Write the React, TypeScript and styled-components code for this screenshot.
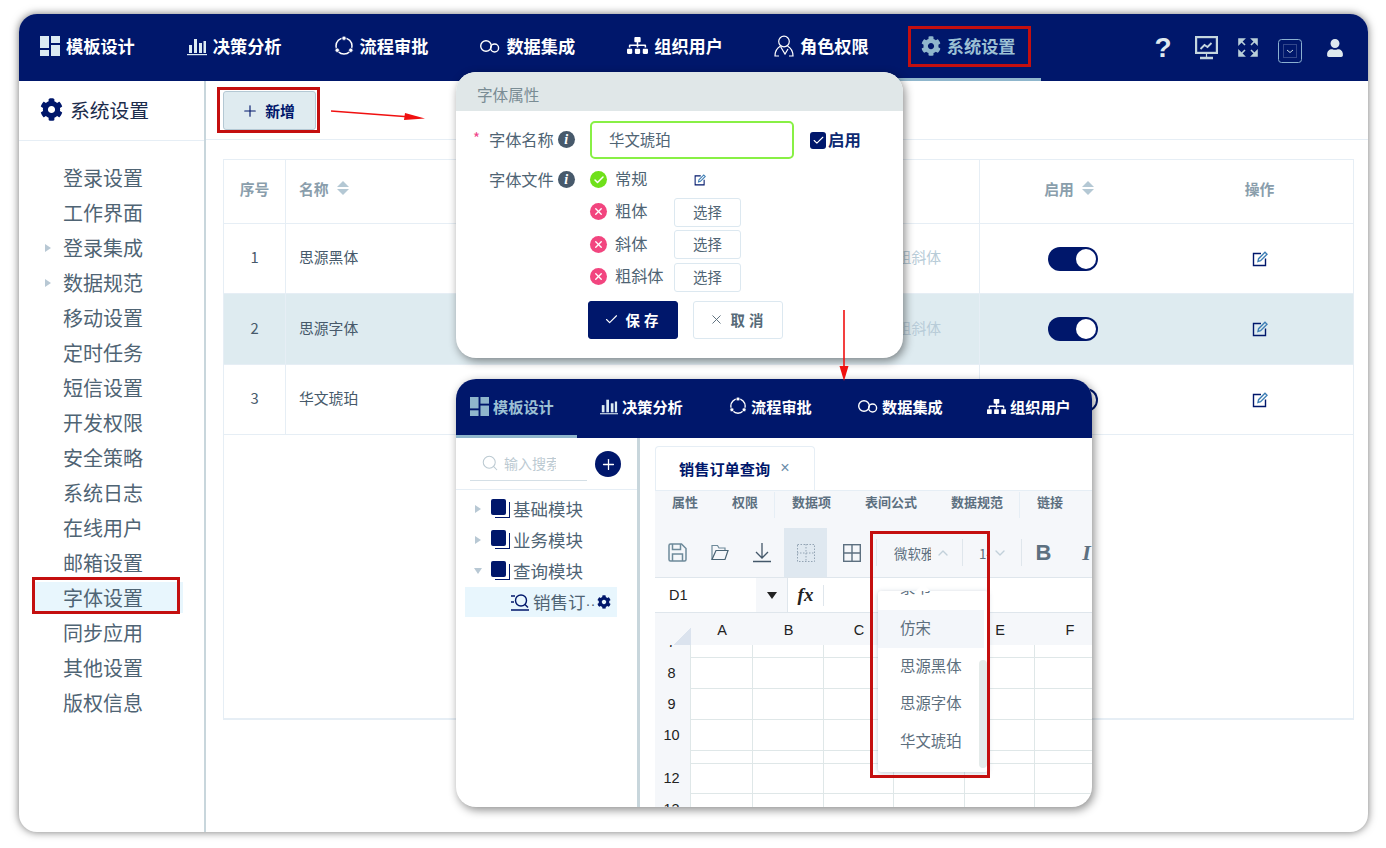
import React from 'react';
import styled, { createGlobalStyle } from 'styled-components';
import { FaCog, FaSitemap, FaUser } from 'react-icons/fa';
import { FiSearch, FiPlus, FiCheck, FiX, FiChevronUp, FiChevronDown } from 'react-icons/fi';

const NAVY = '#00176b';
const RED = '#c40f0f';
const FONT = '"Noto Sans CJK SC", "Liberation Sans", sans-serif';

const GlobalStyle = createGlobalStyle`
  html, body {
    margin: 0;
    padding: 0;
    background: #fff;
  }
  body {
    font-family: ${FONT};
    width: 1386px;
    height: 848px;
    overflow: hidden;
  }
  * {
    box-sizing: border-box;
  }
`;

const Page = styled.div`
  padding: 14px 18px 16px 19px;
`;

const Window = styled.div`
  position: relative;
  width: 1349px;
  height: 818px;
  border-radius: 18px;
  overflow: hidden;
  background: #fff;
  box-shadow: 0 0 9px rgba(0, 0, 0, 0.55);
  display: flex;
  flex-direction: column;
`;

const Header = styled.div`
  height: 67px;
  flex: none;
  background: ${NAVY};
  display: flex;
  align-items: stretch;
`;

const Nav = styled.div<{ $offset: number }>`
  display: flex;
  margin-left: ${(p) => p.$offset}px;
`;

const NavItem = styled.div<{ $active?: boolean }>`
  width: 146.8px;
  flex: none;
  display: flex;
  align-items: center;
  gap: 6px;
  padding: 0 0 1px 27px;
  font-size: 17.2px;
  font-weight: 600;
  color: ${(p) => (p.$active ? '#9cc0d4' : '#fff')};
  border-bottom: 3px solid ${(p) => (p.$active ? '#8fb6cc' : 'transparent')};
  svg {
    flex: none;
  }
`;

const SmallNavItem = styled(NavItem)<{ $first?: boolean }>`
  width: ${(p) => (p.$first ? 121 : 129)}px;
  gap: 4px;
  padding-left: ${(p) => (p.$first ? 14 : 23)}px;
  padding-bottom: 2px;
  font-size: 15.2px;
`;

const HeaderTools = styled.div`
  margin-left: auto;
  display: flex;
  align-items: center;
  color: #dfe9ee;
`;

const ToolSlot = styled.div<{ $w: number; $down?: number }>`
  width: ${(p) => p.$w}px;
  display: flex;
  justify-content: center;
  padding-top: ${(p) => p.$down ?? 0}px;
  font-size: 28px;
  font-weight: 700;
  line-height: 1;
  font-family: "Liberation Sans", sans-serif;
`;

const Body = styled.div`
  flex: 1;
  display: flex;
  min-height: 0;
`;

const Sidebar = styled.div`
  width: 187px;
  flex: none;
  border-right: 2px solid #c8d6dc;
`;

const SideTitle = styled.div`
  height: 60px;
  border-bottom: 1px solid #e6eef5;
  display: flex;
  align-items: center;
  gap: 7px;
  padding: 0 0 2px 21px;
  font-size: 19.8px;
  color: #1c2c4c;
  svg {
    color: ${NAVY};
  }
`;

const SideList = styled.div`
  padding: 19px 0 0 13px;
`;

const SideItem = styled.div<{ $active?: boolean }>`
  position: relative;
  height: 35px;
  width: 151px;
  padding-left: 31px;
  display: flex;
  align-items: center;
  font-size: 20px;
  color: #4f6474;
  background: ${(p) => (p.$active ? 'linear-gradient(#fff 2px, #e8f6fd 2px, #e8f6fd 33px, #fff 33px)' : 'transparent')};
`;

const SideCaret = styled.span`
  position: absolute;
  left: 13px;
  top: 14px;
  width: 0;
  height: 0;
  border-left: 6px solid #b8c8d4;
  border-top: 4.5px solid transparent;
  border-bottom: 4.5px solid transparent;
`;

const Content = styled.div`
  flex: 1;
  min-width: 0;
`;

const TopBar = styled.div`
  height: 59px;
  border-bottom: 1px solid #e6eef5;
  padding: 10px 0 0 17px;
`;

const AddButton = styled.div`
  width: 93px;
  height: 39px;
  background: #dfebf0;
  border: 1px solid #b4c8d4;
  border-radius: 3px;
  display: flex;
  align-items: center;
  justify-content: center;
  gap: 6px;
  padding-right: 3px;
  font-size: 14.8px;
  font-weight: 700;
  color: ${NAVY};
`;

const Table = styled.div`
  margin: 19px 14px 0 17px;
  height: 561px;
  border: 1px solid #e6eef5;
  border-bottom-width: 2px;
`;

const Row = styled.div<{ $h: number; $selected?: boolean }>`
  height: ${(p) => p.$h}px;
  display: grid;
  grid-template-columns: 62px 348px 346px 186px 1fr;
  border-bottom: 1px solid #e6eef5;
  background: ${(p) => (p.$selected ? '#deebf0' : '#fff')};
  font-size: 14.8px;
  color: #46596a;
`;

const Cell = styled.div<{ $align?: string; $line?: boolean; $pad?: number; $head?: boolean; $padRight?: number }>`
  display: flex;
  align-items: center;
  justify-content: ${(p) => p.$align ?? 'flex-start'};
  padding-left: ${(p) => p.$pad ?? 0}px;
  padding-right: ${(p) => p.$padRight ?? 0}px;
  padding-bottom: ${(p) => (p.$head ? 7 : 0)}px;
  border-right: ${(p) => (p.$line ? '1px solid #e6eef5' : 'none')};
  color: ${(p) => (p.$head ? '#8a9eac' : 'inherit')};
  font-weight: ${(p) => (p.$head ? 700 : 400)};
`;

const CellText = styled.span`
  padding-bottom: 4px;
`;

const FontStyles = styled.span`
  padding: 0 38px 4px 0;
  color: #b8ccd8;
  word-spacing: 8px;
`;

const SortMark = styled.span`
  display: inline-flex;
  flex-direction: column;
  gap: 2px;
  margin-left: 8px;
  &::before,
  &::after {
    content: '';
    width: 0;
    height: 0;
    border-left: 6px solid transparent;
    border-right: 6px solid transparent;
  }
  &::before {
    border-bottom: 6px solid #b4c8d4;
  }
  &::after {
    border-top: 6px solid #b4c8d4;
  }
`;

const Toggle = styled.div`
  width: 50px;
  height: 24px;
  border-radius: 12px;
  background: ${NAVY};
  padding: 2px;
  display: flex;
  justify-content: flex-end;
  &::after {
    content: '';
    width: 20px;
    height: 20px;
    border-radius: 50%;
    background: #fff;
  }
`;

/* floating dialog */
const Dialog = styled.div`
  position: absolute;
  left: 437px;
  top: 58px;
  width: 447px;
  height: 286px;
  border-radius: 20px;
  overflow: hidden;
  background: #fff;
  box-shadow: 2px 3px 10px rgba(0, 0, 0, 0.45);
`;

const DialogTitle = styled.div`
  height: 39px;
  background: #e0e7e8;
  padding: 5px 0 0 21px;
  display: flex;
  align-items: center;
  font-size: 15.6px;
  color: #7a8c94;
`;

const Form = styled.div`
  padding: 10px 0 0 33px;
  display: grid;
  grid-template-columns: 101px auto;
  color: #4f6474;
  font-size: 16.2px;
`;

const Label = styled.div<{ $required?: boolean; $top?: number }>`
  position: relative;
  display: flex;
  align-items: center;
  gap: 4px;
  height: 36px;
  margin-top: ${(p) => p.$top ?? 0}px;
  ${(p) =>
    p.$required &&
    `&::before {
      content: '*';
      position: absolute;
      left: -16px;
      top: 6px;
      color: #f0458a;
      font-size: 15px;
    }`}
`;

const InfoDot = styled.span`
  width: 17px;
  height: 17px;
  margin-top: 1px;
  border-radius: 50%;
  background: #47596b;
  color: #fff;
  display: inline-flex;
  align-items: center;
  justify-content: center;
  font: italic 700 14px "Liberation Serif", serif;
`;

const NameRow = styled.div`
  display: flex;
  align-items: center;
  height: 38px;
  margin-bottom: -2px;
`;

const NameInput = styled.div`
  width: 204px;
  height: 38px;
  border: 2px solid #88f045;
  border-radius: 5px;
  padding: 0 0 2px 17px;
  display: flex;
  align-items: center;
  font-size: 15.4px;
  color: #4f6474;
`;

const Check = styled.span`
  margin-left: 16px;
  width: 16px;
  height: 17px;
  border-radius: 3px;
  background: ${NAVY};
  color: #fff;
  display: inline-flex;
  align-items: center;
  justify-content: center;
`;

const CheckLabel = styled.span`
  margin: 0 0 2px 2px;
  font-size: 16.4px;
  font-weight: 600;
  color: #0d2a72;
`;

const FileList = styled.div`
  display: flex;
  flex-direction: column;
  padding-top: 7px;
`;

const FileRow = styled.div<{ $h: number }>`
  height: ${(p) => p.$h}px;
  display: grid;
  grid-template-columns: 25px 59px 66px;
  align-items: center;
`;

const FileName = styled.span`
  padding-bottom: 4px;
`;

const StatusDot = styled.span<{ $ok?: boolean }>`
  width: 17px;
  height: 17px;
  border-radius: 50%;
  margin-bottom: 1px;
  background: ${(p) => (p.$ok ? '#6fe01a' : '#f2457f')};
  color: #fff;
  display: flex;
  align-items: center;
  justify-content: center;
`;

const PickButton = styled.div`
  width: 67px;
  height: 29px;
  border: 1px solid #dce8f0;
  border-radius: 3px;
  padding-bottom: 2px;
  display: flex;
  align-items: center;
  justify-content: center;
  font-size: 14.4px;
  color: #4f6474;
`;

const Actions = styled.div`
  display: flex;
  gap: 15px;
  padding: 7px 0 0 132px;
`;

const ActionButton = styled.div<{ $primary?: boolean }>`
  width: 90px;
  height: 38px;
  border-radius: 3px;
  border: 1px solid ${(p) => (p.$primary ? NAVY : '#dce8f0')};
  background: ${(p) => (p.$primary ? NAVY : '#fff')};
  color: ${(p) => (p.$primary ? '#fff' : '#566a78')};
  font-size: 14.4px;
  font-weight: 700;
  letter-spacing: 4px;
  padding-bottom: 1px;
  display: flex;
  align-items: center;
  justify-content: center;
  gap: 7px;
`;

/* floating designer preview */
const Preview = styled.div`
  position: absolute;
  left: 437px;
  top: 365px;
  width: 636px;
  height: 428px;
  border-radius: 20px;
  overflow: hidden;
  background: #fff;
  box-shadow: 2px 3px 10px rgba(0, 0, 0, 0.45);
  display: flex;
  flex-direction: column;
`;

const PreviewHeader = styled(Header)`
  height: 59px;
`;

const PreviewBody = styled.div`
  flex: 1;
  min-height: 0;
  display: flex;
`;

const TreePane = styled.div`
  width: 184px;
  flex: none;
  border-right: 3px solid #c8d6dc;
`;

const SearchRow = styled.div`
  height: 52px;
  border-bottom: 1px solid #e6eef5;
  display: flex;
  align-items: flex-start;
  padding: 10px 0 0 14px;
  gap: 8px;
`;

const SearchBox = styled.div`
  width: 117px;
  height: 33px;
  border-bottom: 1px solid #d4dfe6;
  display: flex;
  align-items: center;
  gap: 5px;
  padding: 0 0 2px 11px;
  color: #bccad2;
  font-size: 14px;
`;

const SearchText = styled.span`
  width: 52px;
  overflow: hidden;
  white-space: nowrap;
`;

const RoundAdd = styled.div`
  width: 26px;
  height: 26px;
  margin-top: 3px;
  border-radius: 50%;
  background: ${NAVY};
  color: #fff;
  display: flex;
  align-items: center;
  justify-content: center;
`;

const TreeRow = styled.div<{ $first?: boolean }>`
  height: 31px;
  margin-top: ${(p) => (p.$first ? 4 : 0)}px;
  display: flex;
  align-items: center;
  padding: 0 0 2px 19px;
  font-size: 17.5px;
  color: #4f6474;
`;

const TreeCaret = styled.span<{ $open?: boolean }>`
  width: 0;
  height: 0;
  ${(p) =>
    p.$open
      ? `border-top: 6px solid #b8c8d4; border-left: 4.5px solid transparent; border-right: 4.5px solid transparent; margin: 0 9px 0 -1px;`
      : `border-left: 6px solid #b8c8d4; border-top: 4.5px solid transparent; border-bottom: 4.5px solid transparent; margin-right: 10px;`}
`;

const TreeBox = styled.span`
  position: relative;
  width: 17px;
  height: 18px;
  margin: 0 5px 2px 0;
  flex: none;
  &::before {
    content: '';
    position: absolute;
    left: 4px;
    top: 3px;
    width: 14px;
    height: 15px;
    border: 1px solid ${NAVY};
    border-top: none;
    border-left: none;
  }
  &::after {
    content: '';
    position: absolute;
    left: 0;
    top: 0;
    width: 15px;
    height: 16px;
    border-radius: 2px;
    background: ${NAVY};
  }
`;

const TreeLeaf = styled.div`
  margin-left: 9px;
  width: 152px;
  height: 30px;
  background: #e8f6fd;
  display: flex;
  align-items: center;
  padding-left: 46px;
  font-size: 17.5px;
  color: #4f6474;
  svg {
    flex: none;
  }
`;

const LeafText = styled.span`
  margin: 0 2px 1px 4px;
  width: 62px;
  white-space: nowrap;
  overflow: hidden;
`;

const LeafDots = styled.span`
  font-family: "Liberation Sans", sans-serif;
  font-size: 15px;
`;

const DesignPane = styled.div`
  flex: 1;
  min-width: 0;
  padding: 8px 0 0 15px;
  display: flex;
  flex-direction: column;
`;

const TabBar = styled.div`
  height: 44px;
  flex: none;
`;

const Tab = styled.div`
  width: 160px;
  height: 45px;
  border: 1px solid #e6eef5;
  border-bottom: none;
  border-radius: 4px 4px 0 0;
  background: #fff;
  display: flex;
  align-items: center;
  padding: 0 0 3px 23px;
  font-size: 15.2px;
  font-weight: 600;
  color: ${NAVY};
`;

const TabClose = styled.span`
  margin-left: 10px;
  color: #6a8ca8;
  font: 400 16px "Liberation Sans", sans-serif;
`;

const SubTabs = styled.div`
  height: 38px;
  flex: none;
  background: #f5f7fa;
  border-top: 1px solid #e6eef5;
  display: flex;
  align-items: flex-start;
  padding-top: 1px;
  font-size: 13px;
  font-weight: 600;
  color: #5d7080;
`;

const SubTab = styled.span<{ $w: number; $line?: boolean }>`
  width: ${(p) => p.$w}px;
  height: 26px;
  padding-left: 17px;
  border-right: ${(p) => (p.$line ? '1px solid #e6eef5' : 'none')};
`;

const ToolBar = styled.div`
  height: 50px;
  flex: none;
  background: #f5f7fa;
  border-bottom: 1px solid #dfe6ec;
  display: flex;
  align-items: center;
  color: #5d7080;
  overflow: hidden;
`;

const ToolIcon = styled.div<{ $w: number; $on?: boolean }>`
  width: ${(p) => p.$w}px;
  height: 50px;
  flex: none;
  display: flex;
  align-items: center;
  justify-content: center;
  background: ${(p) => (p.$on ? '#dfe8f0' : 'transparent')};
`;

const ToolSep = styled.span`
  width: 1px;
  height: 27px;
  flex: none;
  background: #dfe6ec;
`;

const ToolSelect = styled.div<{ $w: number; $text: number; $pad: number }>`
  width: ${(p) => p.$w}px;
  flex: none;
  display: flex;
  align-items: center;
  padding-left: ${(p) => p.$pad}px;
  font-size: 13.4px;
  color: #5d7080;
  span {
    width: ${(p) => p.$text}px;
    overflow: hidden;
    white-space: nowrap;
  }
  svg {
    color: #c2d0da;
    margin-left: 4px;
  }
`;

const BoldMark = styled.span<{ $italic?: boolean }>`
  font-size: 22px;
  font-weight: 700;
  font-style: ${(p) => (p.$italic ? 'italic' : 'normal')};
  font-family: ${(p) => (p.$italic ? '"Liberation Serif", serif' : '"Liberation Sans", sans-serif')};
`;

const FormulaBar = styled.div`
  height: 35px;
  flex: none;
  display: flex;
  align-items: center;
  border-bottom: 1px solid #dfe6ec;
  font: 14.5px "Liberation Sans", sans-serif;
  color: #222;
`;

const CellName = styled.div`
  width: 101px;
  padding-left: 14px;
`;

const NameDrop = styled.div`
  width: 32px;
  height: 34px;
  background: #f5f7fa;
  border-right: 1px solid #dfe6ec;
  display: flex;
  align-items: center;
  justify-content: center;
  &::after {
    content: '';
    border-top: 7px solid #222;
    border-left: 5px solid transparent;
    border-right: 5px solid transparent;
  }
`;

const FxMark = styled.div`
  width: 36px;
  height: 21px;
  border-right: 1px solid #dfe6ec;
  display: flex;
  align-items: center;
  justify-content: center;
  font: italic 700 19px "Liberation Serif", serif;
`;

const Sheet = styled.div`
  display: grid;
  grid-template-columns: 36px 62px 71px 70px 71px 70px 70px;
  grid-template-rows: 32px 13px 31px 31px 31px 13px 30px 31px;
  font: 14.5px "Liberation Sans", sans-serif;
  color: #222;
`;

const ColHead = styled.div`
  background: #f5f7fa;
  display: flex;
  align-items: center;
  justify-content: center;
  padding-top: 1px;
`;

const Corner = styled(ColHead)`
  background: linear-gradient(135deg, #f5f7fa 75%, #dbe3ee 75%);
`;

const RowHead = styled.div`
  background: #f5f7fa;
  border-right: 1px solid #dfe7e8;
  overflow: hidden;
  display: flex;
  align-items: flex-end;
  justify-content: center;
  line-height: 31px;
  padding-right: 2px;
`;

const SheetCell = styled.div`
  border-right: 1px solid #dfe7e8;
  border-bottom: 1px solid #dfe7e8;
`;

/* opened font list */
const FontMenu = styled.div`
  position: absolute;
  left: 859px;
  top: 577px;
  width: 110px;
  height: 181px;
  background: #fff;
  border-radius: 3px;
  box-shadow: 0 1px 5px rgba(120, 140, 165, 0.45);
  font-size: 15.4px;
  color: #5d6f7e;
  &::before {
    content: '';
    position: absolute;
    left: 40px;
    top: -5px;
    width: 10px;
    height: 10px;
    background: #fff;
    transform: rotate(45deg);
  }
`;

const MenuList = styled.div`
  position: relative;
  height: 100%;
  overflow: hidden;
  border-radius: 3px;
`;

const MenuItem = styled.div<{ $on?: boolean }>`
  width: 106px;
  height: 37.5px;
  padding: 0 0 3px 22px;
  display: flex;
  align-items: center;
  background: ${(p) => (p.$on ? '#f3f6fa' : 'transparent')};
`;

const ClippedMenuItem = styled(MenuItem)`
  height: 19px;
  padding-bottom: 13px;
  align-items: flex-end;
  overflow: hidden;
`;

const ScrollThumb = styled.div`
  position: absolute;
  right: 1px;
  top: 69px;
  width: 8px;
  height: 108px;
  background: #e4ebea;
  border-radius: 4px;
`;

/* review marks on the shot */
const RedBox = styled.div<{ $x: number; $y: number; $w: number; $h: number }>`
  position: absolute;
  left: ${(p) => p.$x}px;
  top: ${(p) => p.$y}px;
  width: ${(p) => p.$w}px;
  height: ${(p) => p.$h}px;
  border: 3px solid ${RED};
`;

const ArrowLayer = styled.svg`
  position: absolute;
  left: 0;
  top: 0;
  width: 1349px;
  height: 818px;
  pointer-events: none;
`;

const TemplateIcon = ({ s = 20, fill = '#dcebf2' }: { s?: number; fill?: string }) => (
  <svg width={s} height={s} viewBox="0 0 20 20" fill={fill}>
    <rect x="0" y="0" width="9" height="12" />
    <rect x="11" y="0" width="9" height="7" />
    <rect x="11" y="9" width="9" height="11" />
    <rect x="0" y="14" width="9" height="6" />
  </svg>
);

const BarsIcon = ({ s = 20 }: { s?: number }) => (
  <svg width={s} height={s} viewBox="0 0 20 20" fill="#dcebf2">
    <rect x="2" y="9" width="3" height="8" />
    <rect x="7" y="3" width="3" height="14" />
    <rect x="12" y="7" width="3" height="10" />
    <rect x="16.5" y="5" width="2.5" height="12" />
    <rect x="0" y="18" width="20" height="1.2" />
  </svg>
);

const CycleIcon = ({ s = 20 }: { s?: number }) => (
  <svg width={s} height={s} viewBox="0 0 20 20" fill="none" stroke="#fff" strokeWidth="1.5">
    <circle cx="10" cy="10" r="8" />
    <circle cx="10" cy="2.2" r="2.2" fill="#fff" stroke={NAVY} strokeWidth="0.8" />
    <circle cx="3.2" cy="14.2" r="2.2" fill="#fff" stroke={NAVY} strokeWidth="0.8" />
    <circle cx="16.8" cy="14.2" r="2.2" fill="#fff" stroke={NAVY} strokeWidth="0.8" />
  </svg>
);

const LoopIcon = ({ s = 20 }: { s?: number }) => (
  <svg width={s} height={s} viewBox="0 0 20 20" fill="none" stroke="#fff" strokeWidth="1.4">
    <circle cx="6" cy="10" r="5.3" />
    <circle cx="14.6" cy="12" r="4" />
  </svg>
);

const RoleIcon = () => (
  <svg width="20" height="22" viewBox="0 0 20 22" fill="none" stroke="#fff" strokeWidth="1.2">
    <circle cx="10" cy="6.5" r="5.3" />
    <path d="M6.5 11C3 13 1 16 1 21h4" />
    <path d="M13.5 11c3.5 2 5.5 5 5.5 10h-4" />
    <path d="M6.5 11.5 11 19l3-5" />
  </svg>
);

const MonitorIcon = () => (
  <svg width="23" height="24" viewBox="0 0 23 24" fill="none" stroke="#c5d6de" strokeWidth="2.2">
    <rect x="1.100" y="1.100" width="20.800" height="15.800" />
    <path d="M5.500 13l4-4 3 2 4-4" strokeWidth="1.800" />
    <path d="M5 22h13" strokeWidth="2.400" />
    <path d="M11.500 17v4" strokeWidth="1.200" />
  </svg>
);

const ExpandIcon = () => (
  <svg width="20" height="19" viewBox="0 0 20 19" fill="#b9cfd9" stroke="#b9cfd9" strokeWidth="1.600">
    <path d="M1 1h5L1 6z" />
    <path d="M19 1h-5l5 5z" />
    <path d="M1 18h5l-5-5z" />
    <path d="M19 18h-5l5-5z" />
    <path d="M3 3l4 4M17 3l-4 4M3 16l4-4M17 16l-4-4" fill="none" />
  </svg>
);

const DropBoxIcon = () => (
  <svg width="24" height="24" viewBox="0 0 24 24" fill="none" stroke="#8ab0d0" strokeWidth="1">
    <rect x=".5" y=".5" width="23" height="23" rx="3" />
    <rect x="5.500" y="5.500" width="13" height="13" stroke="#33478a" />
    <path d="M9 11l3 2.500 3-2.500" stroke="#c5d6de" />
  </svg>
);

const EditIcon = ({ s = 16 }: { s?: number }) => (
  <svg width={s} height={s} viewBox="0 0 16 16" fill="none" stroke={NAVY} strokeWidth="1.4">
    <path d="M9 2.500H1.500v12h12V7.500" />
    <path d="M6 10.500l.6-2.800L13 1.200l2 2-6.400 6.500z" stroke="#3f7fb5" />
  </svg>
);

const SaveIcon = () => (
  <svg width="19" height="19" viewBox="0 0 19 19" fill="none" stroke="#6e8a9a" strokeWidth="1.500">
    <path d="M2.500 1h11L18 5.500V16.500a1.500 1.500 0 0 1-1.500 1.500h-14A1.500 1.500 0 0 1 1 16.500v-14A1.500 1.500 0 0 1 2.500 1z" />
    <path d="M4.500 1v5.500h8V1" />
    <path d="M4.500 18v-7h10v7" />
  </svg>
);

const FolderIcon = () => (
  <svg width="18" height="17" viewBox="0 0 18 17" fill="none" stroke="#6e8a9a" strokeWidth="1.200">
    <path d="M1 15.500V1.500h5.500l1.500 2.500h6v2.500" />
    <path d="M1 15.500h13l3-9H5z" stroke="#4a6474" />
  </svg>
);

const DownloadIcon = () => (
  <svg width="18" height="20" viewBox="0 0 18 20" fill="none" stroke="#44586a" strokeWidth="1.300">
    <path d="M9 0v15M3 9l6 6 6-6" />
    <path d="M0 18.500h18" strokeWidth="1.500" />
  </svg>
);

const DashedGrid = () => (
  <svg width="18" height="18" viewBox="0 0 18 18" fill="none" stroke="#93a4b4" strokeWidth="1" strokeDasharray="1.500 1.500">
    <rect x=".5" y=".5" width="17" height="17" />
    <path d="M9 0v18M0 9h18" />
  </svg>
);

const SolidGrid = () => (
  <svg width="18" height="18" viewBox="0 0 18 18" fill="none" stroke="#5d7080" strokeWidth="1.400">
    <rect x=".7" y=".7" width="16.600" height="16.600" />
    <path d="M9 0v18M0 9h18" />
  </svg>
);

const QueryIcon = () => (
  <svg width="18" height="18" viewBox="0 0 18 18" fill="none" stroke={NAVY} strokeWidth="1.400">
    <path d="M0 3h4M0 9h3M0 17h18" />
    <circle cx="10" cy="7.500" r="5.500" />
    <path d="M14 11.500l3 3" />
  </svg>
);

const navItems: [string, React.ReactNode][] = [
  ['模板设计', <TemplateIcon />],
  ['决策分析', <BarsIcon />],
  ['流程审批', <CycleIcon />],
  ['数据集成', <LoopIcon />],
  ['组织用户', <FaSitemap size={21} />],
  ['角色权限', <RoleIcon />],
  ['系统设置', <FaCog size={20} color="#8fb6cc" />],
];

const previewNav: [string, React.ReactNode][] = [
  ['模板设计', <TemplateIcon s={19} fill="#8fb6cc" />],
  ['决策分析', <BarsIcon s={18} />],
  ['流程审批', <CycleIcon s={18} />],
  ['数据集成', <LoopIcon s={20} />],
  ['组织用户', <FaSitemap size={19} />],
];

const sideItems = ['登录设置', '工作界面', '登录集成', '数据规范', '移动设置', '定时任务', '短信设置', '开发权限', '安全策略', '系统日志', '在线用户', '邮箱设置', '字体设置', '同步应用', '其他设置', '版权信息'];
const fontRows = ['思源黑体', '思源字体', '华文琥珀'];
const fileRows = ['粗体', '斜体', '粗斜体'];
const sheetRows = ['7', '8', '9', '10', '11', '12', '13'];

export default function App() {
  return (
    <Page>
      <GlobalStyle />
      <Window>
        <Header>
          <Nav $offset={-6}>
            {navItems.map(([label, icon], i) => (
              <NavItem key={label} $active={i === 6}>
                {icon}
                {label}
              </NavItem>
            ))}
          </Nav>
          <HeaderTools>
            <ToolSlot $w={44}>?</ToolSlot>
            <ToolSlot $w={42}><MonitorIcon /></ToolSlot>
            <ToolSlot $w={42}><ExpandIcon /></ToolSlot>
            <ToolSlot $w={42} $down={6}><DropBoxIcon /></ToolSlot>
            <ToolSlot $w={47}><FaUser size={18} /></ToolSlot>
            <ToolSlot $w={10} />
          </HeaderTools>
        </Header>
        <Body>
          <Sidebar>
            <SideTitle>
              <FaCog size={23} />
              系统设置
            </SideTitle>
            <SideList>
              {sideItems.map((item) => (
                <SideItem key={item} $active={item === '字体设置'}>
                  {(item === '登录集成' || item === '数据规范') && <SideCaret />}
                  {item}
                </SideItem>
              ))}
            </SideList>
          </Sidebar>
          <Content>
            <TopBar>
              <AddButton>
                <FiPlus size={18} strokeWidth={1.5} />
                新增
              </AddButton>
            </TopBar>
            <Table>
              <Row $h={64}>
                <Cell $head $align="center" $line>序号</Cell>
                <Cell $head $pad={13}>名称<SortMark /></Cell>
                <Cell $line />
                <Cell $head $align="center" $padRight={8}>启用<SortMark /></Cell>
                <Cell $head $align="center">操作</Cell>
              </Row>
              {['思源黑体', '思源字体', '华文琥珀'].map((name, i) => (
                <Row key={name} $h={i === 1 ? 71 : 70} $selected={i === 1}>
                  <Cell $align="center" $line><CellText>{i + 1}</CellText></Cell>
                  <Cell $pad={13}><CellText>{name}</CellText></Cell>
                  <Cell $align="flex-end" $line><FontStyles>常规 粗体 斜体 粗斜体</FontStyles></Cell>
                  <Cell $align="center"><Toggle /></Cell>
                  <Cell $align="center"><EditIcon /></Cell>
                </Row>
              ))}
            </Table>
          </Content>
        </Body>

        <Dialog>
          <DialogTitle>字体属性</DialogTitle>
          <Form>
            <Label $required>字体名称<InfoDot>i</InfoDot></Label>
            <NameRow>
              <NameInput>华文琥珀</NameInput>
              <Check><FiCheck size={13} strokeWidth={2} /></Check>
              <CheckLabel>启用</CheckLabel>
            </NameRow>
            <Label $top={4}>字体文件<InfoDot>i</InfoDot></Label>
            <FileList>
              <FileRow $h={32}>
                <StatusDot $ok><FiCheck size={12} strokeWidth={3} /></StatusDot>
                <FileName>常规</FileName>
                <Cell $pad={20}><EditIcon s={12} /></Cell>
              </FileRow>
              {fileRows.map((name) => (
                <FileRow key={name} $h={32.5}>
                  <StatusDot><FiX size={11} strokeWidth={3} /></StatusDot>
                  <FileName>{name}</FileName>
                  <PickButton>选择</PickButton>
                </FileRow>
              ))}
            </FileList>
          </Form>
          <Actions>
            <ActionButton $primary><FiCheck size={15} strokeWidth={1.8} />保存</ActionButton>
            <ActionButton><FiX size={15} strokeWidth={1.5} />取消</ActionButton>
          </Actions>
        </Dialog>

        <Preview>
          <PreviewHeader>
            <Nav $offset={0}>
              {previewNav.map(([label, icon], i) => (
                <SmallNavItem key={label} $first={i === 0} $active={i === 0}>
                  {icon}
                  {label}
                </SmallNavItem>
              ))}
            </Nav>
          </PreviewHeader>
          <PreviewBody>
            <TreePane>
              <SearchRow>
                <SearchBox>
                  <FiSearch size={18} strokeWidth={1.4} />
                  <SearchText>输入搜索</SearchText>
                </SearchBox>
                <RoundAdd><FiPlus size={17} strokeWidth={1.8} /></RoundAdd>
              </SearchRow>
              <TreeRow $first><TreeCaret /><TreeBox />基础模块</TreeRow>
              <TreeRow><TreeCaret /><TreeBox />业务模块</TreeRow>
              <TreeRow><TreeCaret $open /><TreeBox />查询模块</TreeRow>
              <TreeLeaf>
                <QueryIcon />
                <LeafText>销售订<LeafDots>··</LeafDots></LeafText>
                <FaCog size={14} color={NAVY} />
              </TreeLeaf>
            </TreePane>
            <DesignPane>
              <TabBar>
                <Tab>销售订单查询<TabClose>×</TabClose></Tab>
              </TabBar>
              <SubTabs>
                <SubTab $w={60}>属性</SubTab>
                <SubTab $w={60} $line>权限</SubTab>
                <SubTab $w={73}>数据项</SubTab>
                <SubTab $w={86}>表间公式</SubTab>
                <SubTab $w={86} $line>数据规范</SubTab>
                <SubTab $w={60}>链接</SubTab>
              </SubTabs>
              <ToolBar>
                <ToolIcon $w={44}><SaveIcon /></ToolIcon>
                <ToolIcon $w={41}><FolderIcon /></ToolIcon>
                <ToolIcon $w={44}><DownloadIcon /></ToolIcon>
                <ToolIcon $w={43} $on><DashedGrid /></ToolIcon>
                <ToolIcon $w={49}><SolidGrid /></ToolIcon>
                <ToolSep />
                <ToolSelect $w={85} $text={37} $pad={17}><span>微软雅黑</span><FiChevronUp size={16} /></ToolSelect>
                <ToolSep />
                <ToolSelect $w={58} $text={9} $pad={16}><span>14</span><FiChevronDown size={16} /></ToolSelect>
                <ToolSep />
                <ToolIcon $w={43}><BoldMark>B</BoldMark></ToolIcon>
                <ToolIcon $w={43}><BoldMark $italic>I</BoldMark></ToolIcon>
              </ToolBar>
              <FormulaBar>
                <CellName>D1</CellName>
                <NameDrop />
                <FxMark>fx</FxMark>
              </FormulaBar>
              <Sheet>
                <Corner />
                {['A', 'B', 'C', 'D', 'E', 'F'].map((c) => <ColHead key={c}>{c}</ColHead>)}
                {sheetRows.map((r) => (
                  <React.Fragment key={r}>
                    <RowHead>{r === '11' ? '' : r}</RowHead>
                    {[0, 1, 2, 3, 4, 5].map((c) => <SheetCell key={c} />)}
                  </React.Fragment>
                ))}
              </Sheet>
            </DesignPane>
          </PreviewBody>
        </Preview>

        <FontMenu>
          <MenuList>
            <ClippedMenuItem>隶书</ClippedMenuItem>
            <MenuItem $on>仿宋</MenuItem>
            {fontRows.map((f) => <MenuItem key={f}>{f}</MenuItem>)}
            <ScrollThumb />
          </MenuList>
        </FontMenu>

        <RedBox $x={198} $y={73} $w={103} $h={46} />
        <RedBox $x={889} $y={12} $w={123} $h={41} />
        <RedBox $x={13} $y={563} $w={148} $h={37} />
        <RedBox $x={851} $y={517} $w={120} $h={247} />
        <ArrowLayer viewBox="0 0 1349 818">
          <path d="M312 97 392 103" stroke="#f01010" strokeWidth="1.6" fill="none" />
          <path d="M386 99 406 104.500 385 106z" fill="#f01010" />
          <path d="M825 296V356" stroke="#f01010" strokeWidth="1.6" fill="none" />
          <path d="M820.500 352H829.500L825 367z" fill="#f01010" />
        </ArrowLayer>
      </Window>
    </Page>
  );
}
